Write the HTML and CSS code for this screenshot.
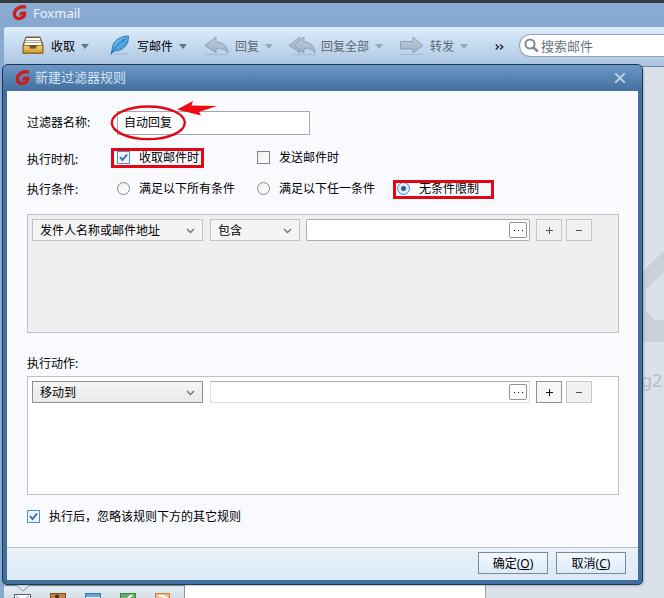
FILE: index.html
```html
<!DOCTYPE html>
<html lang="zh-CN">
<head>
<meta charset="utf-8">
<title>Foxmail</title>
<link rel="stylesheet" href="styles.css">
</head>
<body>
<svg class="defs" width="0" height="0">
  <defs>
    <linearGradient id="steel" x1="0" y1="0" x2="0" y2="1"><stop offset="0" stop-color="#bccddc"/><stop offset="1" stop-color="#9db3c7"/></linearGradient>
    <linearGradient id="gold" x1="0" y1="0" x2="0" y2="1"><stop offset="0" stop-color="#f3d27c"/><stop offset="1" stop-color="#c9982f"/></linearGradient>
    <linearGradient id="blue" x1="0" y1="0" x2="1" y2="1"><stop offset="0" stop-color="#7cc6f2"/><stop offset="1" stop-color="#2f8bd0"/></linearGradient>
    <symbol id="fox" viewBox="0 0 15 16">
      <path d="M14 2C8.500 1 3 3.500 2.300 8.500c-.4 3.800 3 5.800 6.200 4.800 2.600-.8 4.300-2.800 4.100-5.100L8.300 8.400" fill="none" stroke="#c9201d" stroke-width="3.300"/>
      <path d="M9.200 7.500 8 10.500" fill="none" stroke="#c9201d" stroke-width="2"/>
    </symbol>
    <symbol id="chev" viewBox="0 0 9 6"><path d="M1 1l3.500 3.500L8 1" fill="none" stroke="#707478" stroke-width="1.400"/></symbol>
  </defs>
</svg>

<div class="app">
  <header class="app-title"><svg class="app-logo"><use href="#fox"/></svg><span>Foxmail</span></header>
  <nav class="toolbar">
    <div class="tool receive">
      <svg width="22" height="19" viewBox="0 0 22 19">
        <path d="M4 1h14l3 8v8.500H1V9z" fill="#6f5530" stroke="#7c602f"/>
        <path d="M4.500 2h13l1 2h-15z" fill="#fff"/><path d="M3.500 4.500h15l1 2h-17z" fill="#f4f4f2"/><path d="M3 7h16l1 2H2z" fill="#fff"/>
        <path d="M1.500 9.500H7l1.500 3h5l1.500-3h5.500v7.500h-19z" fill="url(#gold)" stroke="#a27825"/>
      </svg>
      <span>收取</span><i class="tri"></i>
    </div>
    <div class="tool compose">
      <svg width="20" height="21" viewBox="0 0 20 21">
        <path d="M4 19h14" stroke="#93abc0" opacity=".6"/>
        <path d="M18.500 1C11 1 3 5 2.500 13L1 19l3-3c8 0 15-5 14.500-15z" fill="url(#blue)" stroke="#2f7db9"/>
        <path d="M1 19.500C4 13 9 8 15 4" fill="none" stroke="#216ba5"/>
      </svg>
      <span>写邮件</span><i class="tri"></i>
    </div>
    <div class="tool reply off">
      <svg width="26" height="20" viewBox="0 0 26 20">
        <path d="M1 18.500h23" stroke="#93a9bc" opacity=".6"/>
        <path d="M1 9.500 12 1v5c7 0 12 4 12 11-3-4-7-4.500-12-4.500V17z" fill="url(#steel)" stroke="#8ba2b7"/>
      </svg>
      <span>回复</span><i class="tri"></i>
    </div>
    <div class="tool reply-all off">
      <svg width="28" height="20" viewBox="0 0 28 20">
        <path d="M4 18.500h23" stroke="#93a9bc" opacity=".6"/>
        <path d="M1 9.500 12 1v16z" fill="url(#steel)" stroke="#8ba2b7"/>
        <path d="M5.500 9.500 16 1v5c6 0 11 4 11 11-3-4-6-4.500-11-4.500V17z" fill="url(#steel)" stroke="#8ba2b7"/>
      </svg>
      <span>回复全部</span><i class="tri"></i>
    </div>
    <div class="tool forward off">
      <svg width="24" height="20" viewBox="0 0 24 20">
        <path d="M1 18.500h22" stroke="#93a9bc" opacity=".6"/>
        <path d="M.5 5.500H13V1l10 8.500L13 17v-4H.5z" fill="url(#steel)" stroke="#8ba2b7"/>
      </svg>
      <span>转发</span><i class="tri"></i>
    </div>
    <svg class="more" width="9" height="6" viewBox="0 0 9 6"><path d="M.7.5 3.500 3 .7 5.500M5 .5 7.800 3 5 5.500" fill="none" stroke="#223" stroke-width="1.300"/></svg>
    <div class="search">
      <svg width="15" height="15" viewBox="0 0 15 15"><circle cx="6" cy="6" r="4.600" fill="none" stroke="#808b95" stroke-width="2"/><path d="M9.500 9.500l4.300 4" stroke="#808b95" stroke-width="2.500"/></svg>
      <span>搜索邮件</span>
    </div>
  </nav>
  <main class="workspace">
    <div class="list-pane">
      <div class="tabs">
        <svg width="180" height="14" viewBox="0 0 180 14">
          <path d="M0 1.500h12.500L19 7l6.500-5.500H180" fill="none" stroke="#8d979e"/>
          <rect x="10.500" y="10.500" width="16" height="8" fill="#fff" stroke="#4e5f73"/><path d="M12 12l4 3M25 12l-4 3" stroke="#8895a5"/>
          <rect x="46.500" y="9.500" width="15" height="8" fill="#c78345" stroke="#7d4b20"/><circle cx="53" cy="12.500" r="2" fill="#4c2a10"/>
          <rect x="81.500" y="9.500" width="15" height="8" fill="#68a5e1" stroke="#3c78b8"/><path d="M82 13.500h14" stroke="#e7f1fb"/>
          <rect x="116.500" y="9.500" width="15" height="8" fill="#67b06b" stroke="#39834a"/><path d="M124 14l4-3" stroke="#fff" stroke-width="2"/>
          <rect x="151.500" y="9.500" width="14" height="8" fill="#f2b98a" stroke="#cf7d3a"/><path d="M155 12h4l5 3" fill="none" stroke="#fff" stroke-width="2"/>
        </svg>
      </div>
    </div>
    <div class="preview">
      <svg class="envelope" width="24" height="100" viewBox="0 0 24 100">
        <path fill-rule="evenodd" d="M0 23 24 0v91H0zM6 38v21l8 10h10V21z" fill="#c9d1d9"/>
      </svg>
      <span class="account">g2</span>
    </div>
  </main>
</div>

<section class="dialog">
  <header class="dialog-title">
    <svg class="dialog-logo"><use href="#fox"/></svg><h1>新建过滤器规则</h1>
    <svg class="close" width="12" height="12" viewBox="0 0 12 12"><path d="M1.200 1.200l9.600 9.600M10.800 1.200l-9.600 9.600" stroke="#b5cbe3" stroke-width="2"/></svg>
  </header>
  <div class="dialog-body">
    <div class="form">
      <div class="row name-row"><label>过滤器名称:</label><div class="name-input">自动回复</div></div>
      <div class="row time-row"><label>执行时机:</label>
        <div class="opt"><span class="box"><svg viewBox="0 0 11 11"><path d="M2 5l2.500 3L9 2.500" fill="none" stroke="#3567a8" stroke-width="1.800"/></svg></span><span class="text">收取邮件时</span></div>
        <div class="opt"><span class="box empty"></span><span class="text">发送邮件时</span></div>
      </div>
      <div class="row cond-row"><label>执行条件:</label>
        <div class="opt"><span class="radio"></span><span class="text">满足以下所有条件</span></div>
        <div class="opt"><span class="radio"></span><span class="text">满足以下任一条件</span></div>
        <div class="opt"><span class="radio on"></span><span class="text">无条件限制</span></div>
      </div>
      <div class="panel disabled">
        <div class="combo wide"><span>发件人名称或邮件地址</span><svg><use href="#chev"/></svg></div>
        <div class="combo narrow"><span>包含</span><svg><use href="#chev"/></svg></div>
        <div class="field"><span class="dots"><i></i><i></i><i></i></span></div>
        <span class="sq plus off"></span><span class="sq off"></span>
      </div>
      <div class="action-label">执行动作:</div>
      <div class="panel">
        <div class="combo wide"><span>移动到</span><svg><use href="#chev"/></svg></div>
        <div class="field"><span class="dots"><i></i><i></i><i></i></span></div>
        <span class="sq plus"></span><span class="sq off"></span>
      </div>
      <div class="opt after"><span class="box"><svg viewBox="0 0 11 11"><path d="M2 5l2.500 3L9 2.500" fill="none" stroke="#3567a8" stroke-width="1.800"/></svg></span><span class="text">执行后，忽略该规则下方的其它规则</span></div>
    </div>
    <footer class="actions"><div class="btn"><span>确定(<u>O</u>)</span></div><div class="btn"><span>取消(<u>C</u>)</span></div></footer>
  </div>
</section>

<svg class="marks" width="664" height="598" viewBox="0 0 664 598">
  <g fill="none" stroke="#e30613">
    <ellipse cx="148.300" cy="122.800" rx="36.500" ry="16.300" stroke-width="2.400"/>
    <rect x="112.500" y="149.500" width="90" height="17" stroke-width="3"/>
    <rect x="394.500" y="181.500" width="98" height="16" stroke-width="3"/>
  </g>
  <path d="M177 109.500 193 101l-1.500 4.500 25.500.5-18 6 2 3.500z" fill="#f00a14"/>
</svg>
</body>
</html>
```
FILE: styles.css
```css
* { box-sizing: border-box; }
body {
  margin: 0;
  width: 664px;
  height: 598px;
  overflow: hidden;
  position: relative;
  font: 12px/16px "Noto Sans", "Noto Sans CJK SC", sans-serif;
  color: #000;
  white-space: nowrap;
}
svg { flex: none; display: block; }
.defs { position: absolute; }

.app { height: 598px; display: flex; flex-direction: column; background: #88a9d0; }
.app-title {
  height: 27px;
  flex: none;
  border-top: 3px solid #343a3e;
  background: linear-gradient(#8cadd2, #85a6ce);
  display: flex;
  align-items: center;
  padding: 0 0 4px 12px;
  gap: 6px;
  color: #e9f2fc;
  font: 13px/18px "Noto Sans", sans-serif;
}
.app-logo, .dialog-logo { width: 15px; height: 16px; }
.toolbar {
  height: 40px;
  flex: none;
  margin-left: 4px;
  padding: 0 0 2px 18px;
  display: flex;
  align-items: center;
  background: linear-gradient(#dcedfc, #abc5e0);
  border-bottom: 1px solid #6f8499;
  border-radius: 3px 0 0 0;
}
.tool { display: flex; align-items: center; flex: none; }
.tool span { padding-top: 2px; }
.tool i { margin: 2px 0 0 6px; }
.receive { width: 88px; }
.receive span { margin-left: 7px; }
.compose { width: 94px; }
.compose span { margin-left: 7px; }
.reply { width: 84px; }
.reply span { margin-left: 5px; }
.reply-all { width: 112px; }
.reply-all span { margin-left: 5px; }
.forward { width: 95px; }
.forward span { margin-left: 6px; }
.tri { border: 4px solid transparent; border-top: 5px solid #60768e; border-bottom: 0; }
.off .tri { border-top-color: #94a9bf; }
.off span { color: #5c6670; }
.more { margin-top: 2px; }
.search {
  margin-left: 15px;
  flex: 1;
  height: 23px;
  background: #fff;
  border: 1px solid #91a4b7;
  border-right: 0;
  border-radius: 12px 0 0 12px;
  display: flex;
  align-items: center;
  padding-left: 4px;
  gap: 2px;
  font-size: 13px;
  color: #68727c;
}
.search span { padding-top: 1px; }
.workspace { flex: 1; margin-left: 4px; display: flex; background: #dbe1e8; }
.list-pane {
  width: 482px;
  border-right: 1px solid #98a0a8;
  background: #fff;
  display: flex;
  align-items: flex-end;
}
.tabs { width: 181px; height: 14px; background: linear-gradient(#eaf1f5, #d4dfe6); border-right: 1px solid #8d979e; }
.preview { flex: 1; padding: 184px 0 0 154px; overflow: hidden; }
.account { display: block; margin: 16px 0 0 1px; font: 18px/26px "Noto Sans", sans-serif; color: #b5c0ca; }

.dialog {
  position: absolute;
  left: 2px;
  top: 64px;
  width: 641px;
  height: 521px;
  border: 1px solid #1c3654;
  border-radius: 6px 6px 5px 5px;
  background: #416f9f;
  padding: 0 4px 4px;
  display: flex;
  flex-direction: column;
  box-shadow: 1px 1px 2px rgba(60, 80, 100, .3);
}
.dialog-title {
  height: 26px;
  flex: none;
  margin: 0 -4px;
  border-radius: 5px 5px 0 0;
  background: linear-gradient(#6d97c6, #416f9f);
  display: flex;
  align-items: center;
  padding: 0 16px 2px 12px;
}
.dialog-logo { margin-top: 1px; }
.dialog-title h1 { margin: 0 0 0 5px; flex: 1; font: 13px/18px "Noto Sans CJK SC", sans-serif; color: #d5e5f6; }
.close { margin-top: 2px; }
.dialog-body { flex: 1; background: #f9fafe; display: flex; flex-direction: column; }
.form { flex: 1; padding: 20px 19px 0 20px; }
.row { display: flex; align-items: center; }
.row label { width: 90px; flex: none; }
.name-row { height: 24px; }
.name-input { width: 193px; height: 24px; border: 1px solid #a5a9ae; background: #fff; line-height: 22px; padding-left: 6px; }
.time-row { height: 16px; margin-top: 15px; }
.cond-row { height: 16px; margin-top: 15px; }
.opt { display: flex; align-items: center; gap: 9px; width: 140px; flex: none; }
.row .opt { height: 16px; margin-top: -2px; }
.opt .text { padding-top: 2px; }
.time-row label { padding-top: 3px; }
.cond-row label { padding-top: 2px; }
.box { width: 13px; height: 13px; border: 1px solid #5c8dc0; background: #eaf3fc; flex: none; }
.box.empty { border-color: #80858a; background: linear-gradient(135deg, #eee, #fff); }
.radio { width: 13px; height: 13px; border: 1px solid #858a90; border-radius: 50%; background: linear-gradient(135deg, #eee, #fff); flex: none; }
.radio.on { border-color: #4f86bd; background: radial-gradient(circle, #285e9b 0 2px, #dcecfa 3px); }
.panel {
  height: 119px;
  border: 1px solid #bfc1c5;
  background: #fff;
  padding: 4px;
  display: flex;
  align-items: flex-start;
}
.panel.disabled { margin-top: 17px; background: #efefef; }
.combo {
  height: 22px;
  border: 1px solid #8c9094;
  background: linear-gradient(#f5f5f5, #e9e9e9);
  display: flex;
  align-items: center;
  justify-content: space-between;
  padding: 0 7px;
  margin-right: 7px;
}
.combo span { padding-top: 1px; }
.combo svg { width: 9px; height: 6px; margin-top: 2px; }
.disabled .combo { border-color: #c2c4c6; background: #f4f4f4; }
.wide { width: 171px; }
.panel .narrow { width: 90px; margin-right: 6px; }
.field {
  flex: 1;
  height: 22px;
  border: 1px solid #dcdee0;
  border-top-color: #a9abae;
  background: #fff;
  display: flex;
  align-items: center;
  justify-content: flex-end;
  padding-right: 2px;
}
.disabled .field { border-color: #abadb0; border-radius: 2px; }
.dots { width: 18px; height: 16px; border: 1px solid #8f9397; border-radius: 2px; display: flex; align-items: center; justify-content: center; gap: 3px; }
.dots i { width: 1px; height: 1px; background: #111; }
.sq {
  width: 26px;
  height: 22px;
  margin-left: 6px;
  border: 1px solid #8f9397;
  background: #f7f7f7;
}
.sq + .sq { margin-left: 4px; margin-right: 22px; }
.sq.plus { background: linear-gradient(#111, #111) 9px 10px / 7px 1px no-repeat, linear-gradient(#111, #111) 12px 7px / 1px 7px no-repeat, #f7f7f7; }
.sq.off { border-color: #c5c7ca; background: linear-gradient(#555, #555) 9px 10px / 6px 1px no-repeat, #eff1f3; }
.sq.plus.off { background: linear-gradient(#555, #555) 9px 10px / 7px 1px no-repeat, linear-gradient(#555, #555) 12px 7px / 1px 7px no-repeat, #eff1f3; }
.action-label { margin: 23px 0 4px; }
.after { margin-top: 12px; width: auto; }
.actions {
  height: 33px;
  flex: none;
  border-top: 1px solid #b7c1ca;
  background: linear-gradient(#eaf2fa, #dbe9f6);
  display: flex;
  justify-content: flex-end;
  padding: 4px 12px 0 0;
  gap: 8px;
}
.btn { width: 70px; height: 22px; border: 1px solid #7c8996; background: linear-gradient(#f3f9fe, #dcebf9); text-align: center; line-height: 22px; }
.marks { position: absolute; left: 0; top: 0; }
```
